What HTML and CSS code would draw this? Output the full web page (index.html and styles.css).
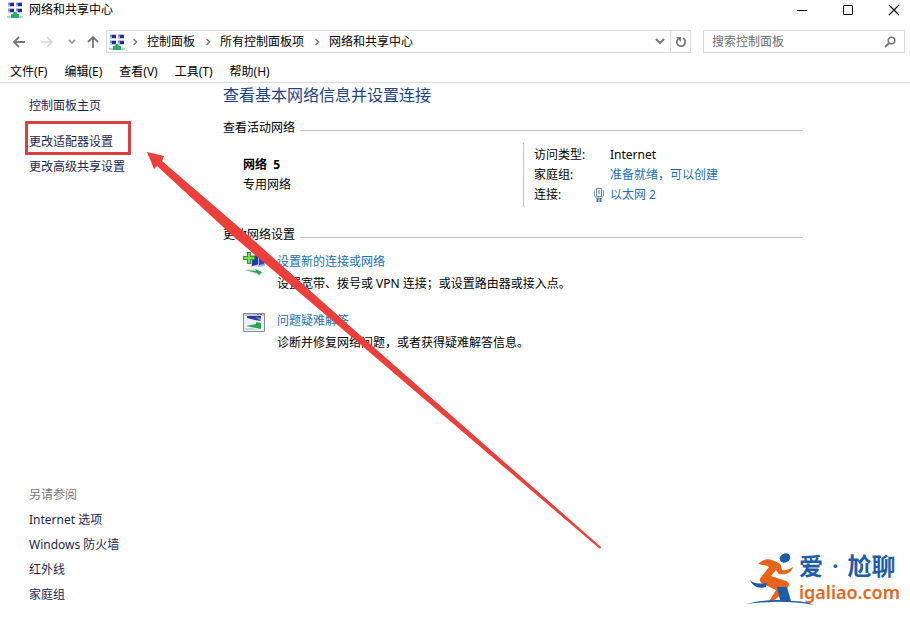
FILE: index.html
```html
<!DOCTYPE html>
<html lang="zh-CN">
<head>
    <meta charset="UTF-8">
    <meta name="viewport" content="width=device-width, initial-scale=1.0">
    <title>网络和共享中心</title>
    <link rel="stylesheet" href="styles.css">
</head>
<body>
    <!-- Shared network icon -->
    <svg class="defs" aria-hidden="true">
        <symbol id="network" viewBox="0 0 16 16">
            <path d="M1 0h6v5H1zM9 0h6v5H9zM1 6h6v5H1zM9 6h6v5H9z" fill="#bcc5e6"/>
            <path d="M3 1h4v3H3zM11 1h4v3h-4zM3 7h4v3H3zM11 7h4v3h-4z" fill="#252a8c"/>
            <path d="M1 1h2v2H1zM9 1h2v2H9zM1 7h2v2H1zM9 7h2v2H9z" fill="#7d8fdc"/>
            <path d="M0 14h16v2H0z" fill="#b9cbc6"/>
            <path d="M7 10h2l1 2h2v4H4v-4h2z" fill="#2bab6b"/>
        </symbol>
        <symbol id="chevron" viewBox="0 0 6 8">
            <path d="M1.500 1l3 3-3 3" fill="none" stroke="#777" stroke-width="1.500"/>
        </symbol>
    </svg>

    <div class="window">
        <header class="titlebar">
            <svg class="app-icon"><use href="#network"/></svg>
            <span class="window-title">网络和共享中心</span>
            <div class="window-buttons">
                <button class="window-button" aria-label="最小化">
                    <svg width="12" height="12"><path d="M1 6.500h10" stroke="#000"/></svg>
                </button>
                <button class="window-button" aria-label="最大化">
                    <svg width="12" height="12"><path d="M1.500 1.500h9v9h-9z" fill="none" stroke="#000"/></svg>
                </button>
                <button class="window-button" aria-label="关闭">
                    <svg width="12" height="12"><path d="M1 1l10 10M11 1L1 11" stroke="#000" stroke-width="1.200"/></svg>
                </button>
            </div>
        </header>

        <div class="navbar">
            <div class="nav-buttons">
                <button class="nav-button" aria-label="后退">
                    <svg width="14" height="12"><path d="M13 6H2M7 1L2 6l5 5" fill="none" stroke="#777" stroke-width="1.800"/></svg>
                </button>
                <button class="nav-button" aria-label="前进">
                    <svg width="14" height="12"><path d="M1 6h11M7 1l5 5-5 5" fill="none" stroke="#d4d4d4" stroke-width="1.500"/></svg>
                </button>
                <button class="nav-button recent" aria-label="最近位置">
                    <svg width="8" height="6"><path d="M1 1l3 3 3-3" fill="none" stroke="#888" stroke-width="1.500"/></svg>
                </button>
                <button class="nav-button up" aria-label="向上">
                    <svg width="12" height="13"><path d="M6 13V2M1 7l5-5 5 5" fill="none" stroke="#777" stroke-width="1.800"/></svg>
                </button>
            </div>
            <div class="address">
                <svg class="app-icon"><use href="#network"/></svg>
                <svg class="chevron"><use href="#chevron"/></svg>
                <a class="crumb" href="#">控制面板</a>
                <svg class="chevron"><use href="#chevron"/></svg>
                <a class="crumb" href="#">所有控制面板项</a>
                <svg class="chevron"><use href="#chevron"/></svg>
                <a class="crumb" href="#">网络和共享中心</a>
                <button class="address-button history" aria-label="历史记录">
                    <svg width="10" height="7"><path d="M1 1l4 4 4-4" fill="none" stroke="#777" stroke-width="2"/></svg>
                </button>
                <button class="address-button refresh" aria-label="刷新">
                    <svg width="12" height="12"><path d="M8 2.200A4.200 4.200 0 1 1 3 3" fill="none" stroke="#777" stroke-width="1.800"/><path d="M1 1h5v5z" fill="#777"/></svg>
                </button>
            </div>
            <div class="search">
                <input class="search-input" type="text" placeholder="搜索控制面板" aria-label="搜索控制面板">
                <svg width="12" height="12"><circle cx="7.500" cy="4.500" r="3.300" fill="none" stroke="#777" stroke-width="1.600"/><path d="M5 7l-4 4" stroke="#777" stroke-width="2"/></svg>
            </div>
        </div>

        <nav class="menubar">
            <button class="menu">文件(F)</button>
            <button class="menu">编辑(E)</button>
            <button class="menu">查看(V)</button>
            <button class="menu">工具(T)</button>
            <button class="menu">帮助(H)</button>
        </nav>

        <div class="content">
            <aside class="sidebar">
                <a class="side-link home" href="#">控制面板主页</a>
                <a class="side-link marked" href="#">更改适配器设置</a>
                <a class="side-link" href="#">更改高级共享设置</a>
                <div class="see-also">
                    <span class="see-also-title">另请参阅</span>
                    <a class="side-link" href="#">Internet 选项</a>
                    <a class="side-link" href="#">Windows 防火墙</a>
                    <a class="side-link" href="#">红外线</a>
                    <a class="side-link" href="#">家庭组</a>
                </div>
            </aside>

            <main class="main">
                <h1 class="page-title">查看基本网络信息并设置连接</h1>

                <h2 class="section-title">查看活动网络</h2>
                <div class="active-network">
                    <div class="network-name">
                        <strong>网络&nbsp; 5</strong>
                        <span>专用网络</span>
                    </div>
                    <dl class="details">
                        <dt>访问类型:</dt>
                        <dd>Internet</dd>
                        <dt>家庭组:</dt>
                        <dd><a class="link" href="#">准备就绪，可以创建</a></dd>
                        <dt>连接:
                            <svg class="plug" width="10" height="16">
                                <path d="M2.500 1.500h5v8h-5z" fill="#e8eef4" stroke="#71869c"/>
                                <path d="M.5 3v6l2 2h5l2-2V3" fill="none" stroke="#8b9cad"/>
                                <path d="M5 3v4" stroke="#71869c"/>
                                <path d="M3.500 11v4M6.500 11v4" stroke="#34799f" stroke-width="2"/>
                            </svg>
                        </dt>
                        <dd><a class="link" href="#">以太网 2</a></dd>
                    </dl>
                </div>

                <h2 class="section-title">更改网络设置</h2>
                <div class="task">
                    <svg class="task-icon" viewBox="0 0 24 26">
                        <path d="M8 4l9-1v12l-9 1z" fill="#b9c5e8"/>
                        <path d="M9 5l7-1v9l-7 2z" fill="#2636a8"/>
                        <path d="M15 4l7 1v10l-7 1z" fill="#a9b8e6"/>
                        <path d="M16 5l5 1v7l-5 1z" fill="#3445bd"/>
                        <path d="M18 6l3 1v4z" fill="#8fa4ef"/>
                        <path d="M1 19l9-2 11 5-4 3z" fill="#dbe6e2"/>
                        <path d="M2 19l11 1-1-2 7 3-3 3-2-2z" fill="#27a65b"/>
                        <path d="M4 1h4v4h4v4H8v4H4V9H0V5h4z" fill="#28962b"/>
                        <path d="M5 2h2v4h4v2H7v4H5V8H1V6h4z" fill="#80dc54"/>
                    </svg>
                    <div class="task-text">
                        <a class="link" href="#">设置新的连接或网络</a>
                        <p>设置宽带、拨号或 VPN 连接；或设置路由器或接入点。</p>
                    </div>
                </div>
                <div class="task">
                    <svg class="task-icon" viewBox="0 0 24 26">
                        <path d="M.5 3.500h21v18H.5z" fill="#eef1f5" stroke="#858b96"/>
                        <path d="M1 4h20v2H1z" fill="#c3cad8"/>
                        <path d="M14 4h2v1h-2zM17 4h2v1h-2z" fill="#596579"/>
                        <path d="M4 6h14v5l-6-1-8-2z" fill="#2739a0"/>
                        <path d="M12 7l6 1v3z" fill="#8193dd"/>
                        <path d="M3 16l10-2v-2l5 1v6l-5-1z" fill="#28a451"/>
                        <path d="M2 18h8l6 2H2z" fill="#cbd4d8"/>
                    </svg>
                    <div class="task-text">
                        <a class="link" href="#">问题疑难解答</a>
                        <p>诊断并修复网络问题，或者获得疑难解答信息。</p>
                    </div>
                </div>
            </main>
        </div>

        <!-- Arrow pointing at the adapter settings link -->
        <svg class="arrow" width="456" height="400" aria-hidden="true">
            <path d="M0 0L17 4 15 9 94 77 205 176 454 395 453 397 200 181 87 85 10 14 7 17z" fill="#ec3e3b"/>
        </svg>

        <div class="brand">
            <svg class="brand-logo" viewBox="0 0 70 56">
                <ellipse cx="39" cy="7" rx="5.500" ry="4.500" fill="#1d5ca8" transform="rotate(-25 39 7)"/>
                <path d="M12 13c4-4 9-6 14-4l7 3c2 1 2 3 3 7 4 1 7-1 11-3-2 6-6 8-14 7l-3-4-5 6 15 5c3 1 4 3 2 6-5 6-9 10-17 15l-3 1 8-13-13-6c-4-2-4-5-1-8l7-9c-4-2-7-2-11-3z" fill="#e6651a"/>
                <path d="M4 29c4 4 9 4 17 3l-1 4c-7 2-13 0-16-7z" fill="#1d5ca8"/>
                <path d="M31 36h10l4 14c9 0 17 1 23 4-22-4-45-4-68-1 11-3 21-4 34-4z" fill="#1d5ca8"/>
            </svg>
            <div class="brand-text">
                <span class="brand-name">爱<span class="dot">·</span>尬聊</span>
                <span class="brand-url">igaliao.com</span>
            </div>
        </div>
    </div>
</body>
</html>
```
FILE: styles.css
```css
* {
    box-sizing: border-box;
}

body {
    margin: 0;
    background-color: #fff;
    color: #000;
    font-family: "Noto Sans", "Noto Sans CJK SC", sans-serif;
    font-size: 12px;
    line-height: 20px;
}

button {
    padding: 0;
    border: none;
    background: none;
    font: inherit;
    color: inherit;
}

a {
    text-decoration: none;
}

a:hover {
    text-decoration: underline;
}

svg {
    display: block;
    flex-shrink: 0;
}

.defs {
    position: absolute;
    width: 0;
    height: 0;
}

.window {
    position: relative;
    display: flex;
    flex-direction: column;
    min-height: 100vh;
}

.app-icon {
    width: 16px;
    height: 16px;
}

/* Title bar */
.titlebar {
    display: flex;
    align-items: center;
    gap: 6px;
    height: 20px;
    padding-left: 7px;
}

.window-buttons {
    display: flex;
    margin-left: auto;
    gap: 34px;
    padding-right: 10px;
}

.window-button {
    width: 12px;
    height: 12px;
}

/* Navigation */
.navbar {
    display: flex;
    margin-top: 10px;
    padding-right: 5px;
}

.nav-buttons {
    display: flex;
    align-items: center;
    gap: 14px;
    width: 106px;
    padding-left: 12px;
}

.nav-button.up {
    margin-left: -3px;
}

.address {
    display: flex;
    flex: 1;
    align-items: center;
    height: 23px;
    padding-left: 2px;
    border: 1px solid #d9d9d9;
}

.address .app-icon {
    margin-right: -3px;
}

.chevron {
    width: 6px;
    height: 8px;
    margin: 0 9px 0 10px;
}

.crumb {
    color: #000;
}

.address-button {
    display: flex;
    align-items: center;
    justify-content: center;
    align-self: stretch;
    width: 20px;
}

.history {
    margin-left: auto;
}

.refresh {
    border-left: 1px solid #d9d9d9;
}

.search {
    display: flex;
    align-items: center;
    width: 202px;
    margin-left: 12px;
    padding: 0 8px;
    border: 1px solid #d9d9d9;
}

.search-input {
    flex: 1;
    min-width: 0;
    padding: 0;
    border: none;
    outline: none;
    font: inherit;
}

.search-input::placeholder {
    color: #6d6d6d;
}

/* Menu bar */
.menubar {
    display: flex;
    gap: 17px;
    height: 30px;
    padding: 9px 10px 0;
    border-bottom: 1px solid #dadada;
}

.menu {
    height: 20px;
}

/* Content */
.content {
    display: flex;
    flex: 1;
}

.sidebar {
    display: flex;
    flex-direction: column;
    align-items: flex-start;
    width: 223px;
    padding: 10px 0 11px 29px;
    line-height: 25px;
}

.side-link {
    color: #1a1f50;
}

.home {
    margin-bottom: 11px;
}

.marked {
    position: relative;
}

.marked::after {
    content: "";
    position: absolute;
    top: -8px;
    right: -18px;
    bottom: -1px;
    left: -4px;
    border: 3px solid #dc3f42;
}

.see-also {
    display: flex;
    flex-direction: column;
    margin-top: auto;
}

.see-also-title {
    color: #777;
}

.main {
    flex: 1;
    padding-right: 107px;
}

.page-title {
    margin: 0;
    color: #1c4587;
    font-size: 16px;
    font-weight: 400;
    line-height: 24px;
}

.section-title {
    display: flex;
    align-items: center;
    gap: 5px;
    margin: 11px 0 0;
    font-size: 12px;
    font-weight: 400;
}

.section-title::after {
    content: "";
    flex: 1;
    height: 1px;
    margin-top: 4px;
    background-color: #c3c3c3;
}

.active-network {
    display: flex;
    margin: 5px 0 18px;
    padding-left: 20px;
}

.network-name {
    display: flex;
    flex: 1;
    flex-direction: column;
    padding-top: 12px;
}

.details {
    display: grid;
    grid-template-columns: 76px 1fr;
    width: 280px;
    margin: 0;
    padding: 2px 0 2px 10px;
    border-left: 1px solid #c3c3c3;
}

.details dt {
    display: flex;
    align-items: center;
    justify-content: space-between;
    padding-right: 6px;
}

.details dd {
    margin: 0;
}

.link {
    color: #1a6fb5;
}

.task {
    display: flex;
    gap: 10px;
    margin-bottom: 15px;
    padding-left: 20px;
}

.section-title + .task {
    margin-top: 6px;
}

.task-icon {
    width: 24px;
    height: 26px;
}

.task-text {
    line-height: 22px;
}

.task-text p {
    margin: 0;
}

.arrow {
    position: absolute;
    top: 152px;
    left: 147px;
    pointer-events: none;
}

/* Brand */
.brand {
    position: absolute;
    right: 10px;
    bottom: 11px;
    display: flex;
    align-items: center;
}

.brand-logo {
    width: 70px;
    height: 56px;
    margin-right: -17px;
}

.brand-text {
    display: flex;
    flex-direction: column;
    font-weight: 600;
    line-height: 26px;
}

.brand-name {
    color: #1d5ca8;
    font-size: 24px;
}

.dot {
    margin: 0 9px;
}

.brand-url {
    color: #e6651a;
    font-size: 18px;
}
```
